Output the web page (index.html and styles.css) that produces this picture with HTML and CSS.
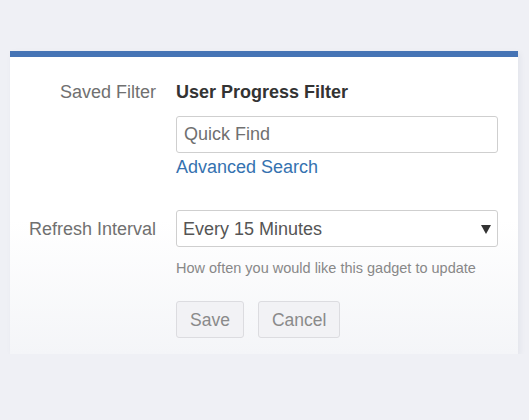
FILE: index.html
```html
<!DOCTYPE html>
<html lang="en">
<head>
  <meta charset="UTF-8">
  <meta name="viewport" content="width=device-width, initial-scale=1" />
  <title>Gadget Settings</title>
  <link rel="stylesheet" href="styles.css">
</head>
<body>
  <form class="gadget-card" id="gadgetForm">
    <div class="row">
      <span class="label">Saved Filter</span>
      <strong class="value">User Progress Filter</strong>
    </div>

    <div class="row search-row">
      <span></span>
      <div class="field">
        <input type="text" class="text-input" placeholder="Quick Find">
        <a href="#" class="link">Advanced Search</a>
      </div>
    </div>

    <div class="row refresh-row">
      <label class="label" for="refresh">Refresh Interval</label>
      <div class="field">
        <div class="select-wrap">
          <select id="refresh" class="select-input">
            <option>Every 15 Minutes</option>
            <option>Every 30 Minutes</option>
            <option>Every Hour</option>
            <option>Never</option>
          </select>
          <span class="arrow"></span>
        </div>
        <div class="help">How often you would like this gadget to update</div>
      </div>
    </div>

    <div class="row buttons-row">
      <span></span>
      <div class="buttons">
        <button type="button" class="btn">Save</button>
        <button type="button" class="btn">Cancel</button>
      </div>
    </div>
  </form>
</body>
</html>
```

FILE: styles.css
```css
body {
  margin: 0;
  padding: 51px 11px 0 10px;
  background: #eff0f5;
  font-family: "Liberation Sans", Arial, sans-serif;
  font-size: 18px;
}

.gadget-card {
  background: linear-gradient(to bottom, #ffffff 0%, #ffffff 55%, #f4f5f8 100%);
  border-top: 6px solid #4674b5;
  padding: 25px 0 16px 0;
  box-shadow: 2px 2px 6px rgba(40, 50, 90, 0.06);
}

.row {
  display: grid;
  grid-template-columns: 146px 322px;
  column-gap: 20px;
  align-items: start;
}

.label {
  text-align: right;
  color: #707070;
  line-height: 20px;
}

.value {
  color: #333;
  line-height: 20px;
}

.search-row {
  margin-top: 14px;
}

.text-input,
.select-input {
  display: block;
  box-sizing: border-box;
  width: 100%;
  height: 37px;
  margin: 0;
  border: 1px solid #cfcfcf;
  border-radius: 3px;
  background: #fff;
  font-family: inherit;
  font-size: 18px;
  padding: 0 7px;
  color: #555;
  outline: none;
}

.text-input::placeholder {
  color: #707070;
}

.link {
  display: block;
  margin-top: 4px;
  line-height: 20px;
  color: #3572b0;
  text-decoration: none;
}

.refresh-row {
  margin-top: 33px;
  align-items: center;
}

.refresh-row .label {
  align-self: start;
  margin-top: 9px;
}

.select-wrap {
  position: relative;
}

.select-input {
  appearance: none;
  -webkit-appearance: none;
  padding-left: 6px;
}

.arrow {
  position: absolute;
  right: 7px;
  top: 15px;
  width: 0;
  height: 0;
  border-left: 5px solid transparent;
  border-right: 5px solid transparent;
  border-top: 9px solid #333;
  pointer-events: none;
}

.help {
  margin-top: 12px;
  font-size: 14.5px;
  line-height: 18px;
  color: #888;
}

.buttons-row {
  margin-top: 24px;
}

.buttons {
  display: flex;
  gap: 14px;
}

.btn {
  height: 37px;
  padding: 1px 13px 0;
  border: 1px solid #dcdce0;
  border-radius: 3px;
  background: #f2f2f5;
  color: #8a8a8a;
  font-family: inherit;
  font-size: 17.5px;
  cursor: pointer;
}
```
